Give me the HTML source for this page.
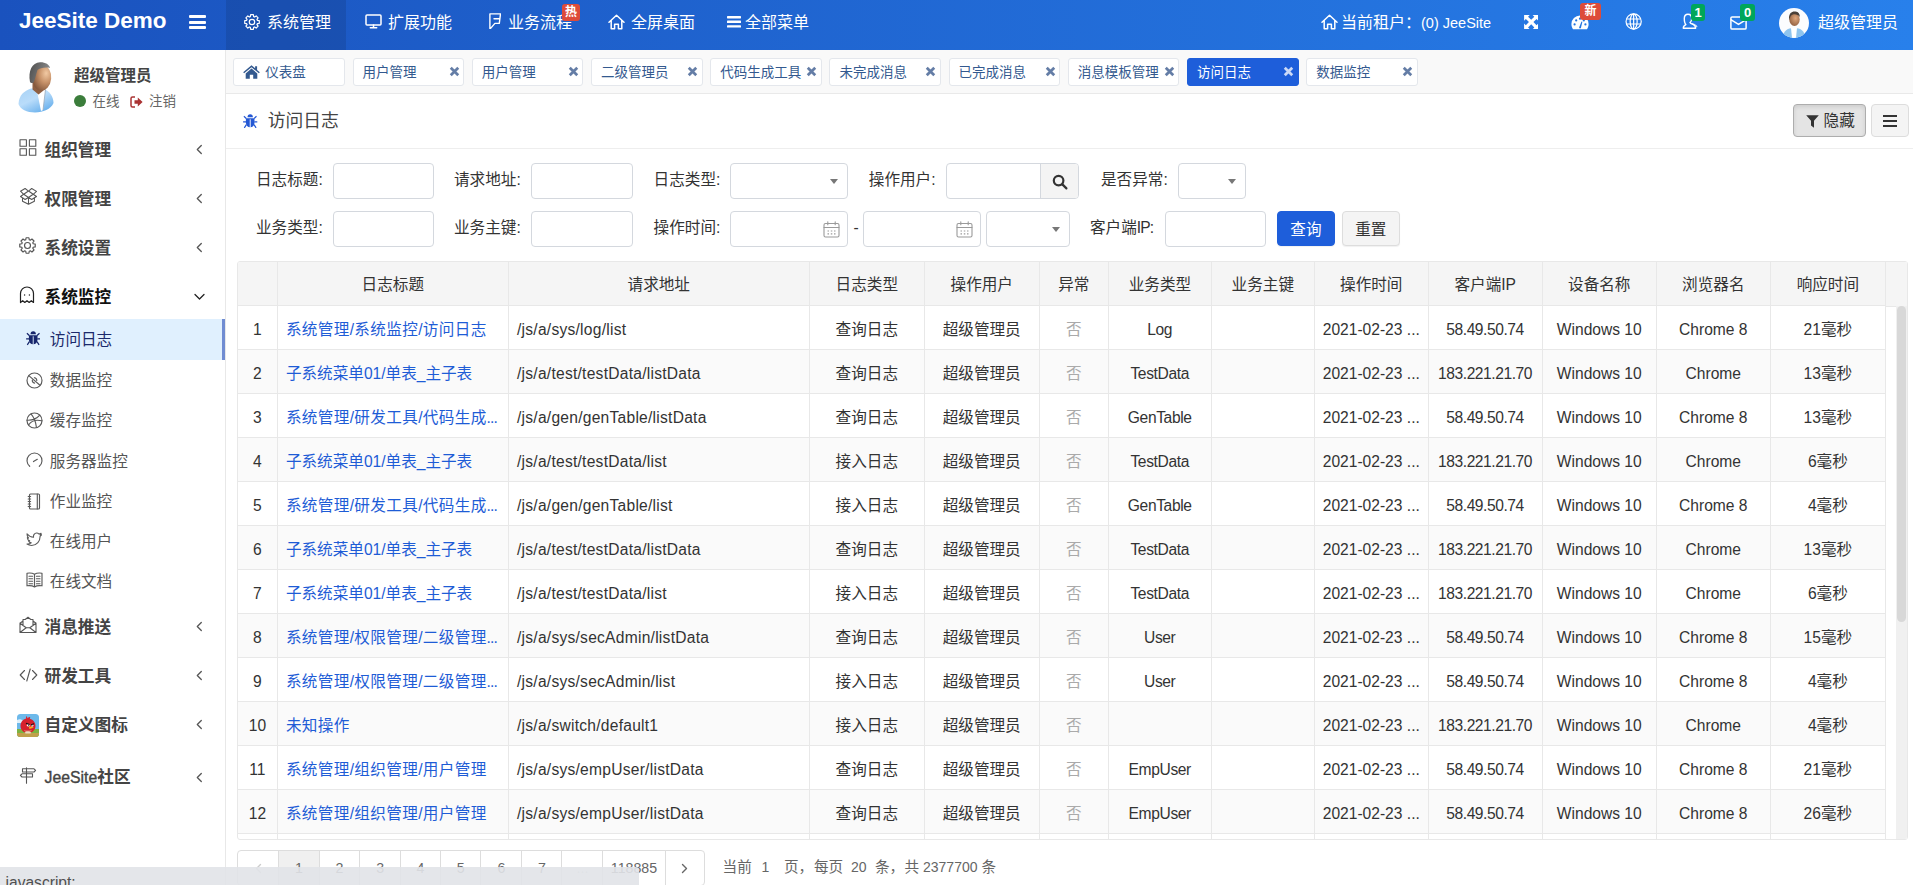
<!DOCTYPE html>
<html lang="zh-CN">
<head>
<meta charset="utf-8">
<title>JeeSite Demo</title>
<style>
*{box-sizing:border-box;margin:0;padding:0}
html,body{width:1913px;height:885px;overflow:hidden;background:#fff}
body{font-family:"Liberation Sans","Noto Sans CJK SC",sans-serif;font-size:14px;color:#333;position:relative}
a{text-decoration:none;color:inherit}
svg{display:block}
/* ---------- header ---------- */
#hdr{position:absolute;left:0;top:0;width:1913px;height:50px;background:linear-gradient(90deg,#1a52be 0%,#2880eb 100%);color:#fff}
#logo{position:absolute;left:19px;top:0;height:50px;line-height:42px;font-size:22.5px;font-weight:bold;white-space:nowrap}
#burger{position:absolute;left:189px;top:15px;width:17px;height:14px}
#burger i{position:absolute;left:0;width:17px;height:3px;border-radius:1px;background:#fff}
.nav{position:absolute;top:0;height:50px;line-height:45px;font-size:16px;white-space:nowrap}
.nav.on{background:rgba(0,0,0,.1)}
.nav svg{position:absolute}
.nav span{position:absolute;top:0}
.badge{position:absolute;font-size:12px;font-weight:bold;line-height:17px;height:17px;border-radius:3px;color:#fff;text-align:center}
/* ---------- tabs ---------- */
#tabs{position:absolute;left:226px;top:50px;width:1687px;height:44px;background:#f9f9f9;border-bottom:1px solid #e9e9e9}
.tab{position:absolute;top:7.800px;width:111.600px;height:28.400px;border:1px solid #e4e7ec;border-radius:3px;background:#fff;color:#33598f;font-size:13.500px;line-height:27px;padding-left:9px;white-space:nowrap}
.tab.on{background:#1e5eda;border-color:#1e5eda;color:#fff}
.tab .x{position:absolute;right:3.600px;top:7.600px;width:11px;height:11px;color:#647da6}
.tab.on .x{color:#cbd9f7}
/* ---------- sidebar ---------- */
#side{position:absolute;left:0;top:50px;width:226px;height:835px;background:#fff;border-right:1px solid #e8e8e8}
.m1{position:absolute;left:0;width:225px;height:49px;line-height:47px;font-size:16.700px;font-weight:bold;color:#444}
.m1 span{position:absolute;left:44.500px;top:1.700px;white-space:nowrap}
.m1 svg.ic{position:absolute;left:19px;top:14px}
.m1 svg.ar{position:absolute;left:195px;top:19px}
.m2{position:absolute;left:0;width:225px;height:40.500px;line-height:39px;font-size:15.600px;color:#555}
.m2 span{position:absolute;left:49.800px;top:1.400px;white-space:nowrap}
.m2 svg{position:absolute;left:25.800px;top:12.300px}
.m2.on{background:#e0f0fe;border-right:3px solid #708cd2;width:225px;color:#1b2a6b}

#user{position:absolute;left:0;top:0;width:225px;height:70px}
#ava{position:absolute;left:18.300px;top:11.800px}
#uname{position:absolute;left:74px;top:14.800px;font-size:15.500px;font-weight:bold;color:#444;line-height:22px;white-space:nowrap}
#ustat{position:absolute;left:74px;top:43px;font-size:13.500px;color:#666;line-height:18px;height:18px;width:140px}
#ustat i{position:absolute;left:.3px;top:1.700px;width:12.200px;height:12.200px;border-radius:50%;background:#3b7d3b}
#ustat span{position:absolute;top:0;white-space:nowrap}

/* ---------- main ---------- */
#main{position:absolute;left:226px;top:94px;width:1687px;height:791px;background:#fff}
#tbar{position:absolute;left:0;top:0;width:1687px;height:54.900px;border-bottom:1px solid #eee}
#ttl{position:absolute;left:41.700px;top:14px;font-size:17.800px;line-height:26px;color:#444;white-space:nowrap}
.tb1{position:absolute;left:1567.100px;top:10px;width:72.800px;height:32.800px;border:1px solid #adadad;border-radius:4px;background:#e4e4e4;box-shadow:inset 0 2px 4px rgba(0,0,0,.1);font-size:15.600px;color:#333}
.tb1 span{position:absolute;left:29.500px;top:0;line-height:31px;white-space:nowrap}
.tb2{position:absolute;left:1645.100px;top:10px;width:37.600px;height:32.800px;border:1px solid #ddd;border-radius:4px;background:#f4f4f4}
.tb2 i{position:absolute;left:11px;width:14px;height:2px;background:#333}
#form{position:absolute;left:0;top:0;width:1687px;height:0;font-size:15.600px}
.lb{position:absolute;height:35.200px;line-height:33.500px;color:#333;white-space:nowrap}
.in{position:absolute;height:35.200px;border:1px solid #d4d8de;border-radius:4px;background:#fff}
.tri{position:absolute;right:9px;top:14.800px;width:0;height:0;border-left:4.700px solid transparent;border-right:4.700px solid transparent;border-top:5.600px solid #777}
.cal{position:absolute;right:7px;top:8.500px}
.sb{position:absolute;right:0;top:0;width:38.500px;height:33.200px;border-left:1px solid #d4d8de;background:#f4f4f4;border-radius:0 3px 3px 0}
.sb svg{position:absolute;left:11px;top:9.500px}
.btn{position:absolute;margin-top:-.4px;height:35.200px;line-height:35px;box-shadow:0 1px 1px rgba(0,0,0,.06);text-align:center;border:1px solid #ddd;border-radius:4px;background:#f4f4f4;color:#333;font-size:15.600px}
.btn.pri{background:#1e5eda;border-color:#1e5eda;color:#fff}
#grid{position:absolute;left:11px;top:166.900px;width:1671px;height:579.400px;border:1px solid #e8e8e8;border-radius:3px;overflow:hidden;background:#fff}
#grid table{border-collapse:separate;border-spacing:0;table-layout:fixed;width:1647.800px;font-size:15.600px}
#grid th{height:43.800px;background:#f5f5f5;font-weight:normal;color:#333;text-align:center;border-right:1px solid #e8e8e8;border-bottom:1px solid #e8e8e8;white-space:nowrap;padding:0}
#grid td{height:44px;border-right:1px solid #e8e8e8;border-bottom:1px solid #e8e8e8;white-space:nowrap;overflow:hidden;padding:1px 8px 0;color:#333}
#grid tbody tr:nth-child(even) td{background:#fafafa}
#grid td:before,#grid th:before,.pg:before{content:"\4e00";visibility:hidden;display:inline;margin-right:-1em}
#grid td.c{text-align:center;padding:1px 2px 0}
#grid td.l a{color:#1e5cd6;letter-spacing:.35px}
#grid td.l a.z{letter-spacing:0}
#grid td.l a i{font-style:normal;letter-spacing:-.9px}
#grid td.u{letter-spacing:.25px}
#grid td.ip{letter-spacing:-.45px}
#grid td.b{letter-spacing:-.37px}
#grid td.n{color:#aaa}
#sbar{position:absolute;left:1648px;top:0;width:23px;height:578px;background:#fff}
#sbar:before{content:"";position:absolute;left:0;top:0;width:23px;height:43.800px;background:#f5f5f5;border-bottom:1px solid #e8e8e8}
#sbar:after{content:"";position:absolute;left:10.300px;top:43.800px;width:10.700px;height:540px;background:#f0f0f0}
#sbar i{position:absolute;z-index:1;left:11px;top:44px;width:9px;height:315.800px;border-radius:4.500px;background:#d8d8d8}
#pager{position:absolute;left:11.300px;top:755.700px;width:468.500px;height:36px;font-size:14.200px}
.pg{position:absolute;top:0;height:36px;line-height:35.500px;text-align:center;border:1px solid #ddd;color:#666;background:#fff}
.pg:first-child{border-radius:4px 0 0 4px}
.pg:last-child{border-radius:0 4px 4px 0}
.pg.act{background:#f0f0f0}
.pg.dis{color:#ccc}
.pg svg{position:absolute;left:50%;top:12px;margin-left:-3.500px}
#pinfo{position:absolute;left:496px;top:755.700px;height:36px;line-height:35px;font-size:14.600px;color:#666;white-space:nowrap}
#pinfo span{position:absolute;top:0}
#status{position:absolute;left:0;top:866.600px;width:638.800px;height:19px;background:rgba(225,227,232,.9);color:#505050;font-size:15.600px;line-height:32.400px;padding-left:5.500px;border-top-right-radius:3px;overflow:hidden}
</style>
</head>
<body>
<!-- ================= HEADER ================= -->
<div id="hdr">
  <div id="logo">JeeSite Demo</div>
  <div id="burger"><i style="top:0"></i><i style="top:5.5px"></i><i style="top:11px"></i></div>

  <a class="nav on" style="left:226px;width:120px">
    <svg style="left:18px;top:14px" width="16" height="16" viewBox="0 0 16 16" fill="none" stroke="#fff" stroke-width="1.2" stroke-linejoin="round"><path d="M6.32 2.66 L6.66 0.72 L9.34 0.72 L9.68 2.66 L10.59 3.04 L12.20 1.90 L14.10 3.80 L12.96 5.41 L13.34 6.32 L15.28 6.66 L15.28 9.34 L13.34 9.68 L12.96 10.59 L14.10 12.20 L12.20 14.10 L10.59 12.96 L9.68 13.34 L9.34 15.28 L6.66 15.28 L6.32 13.34 L5.41 12.96 L3.80 14.10 L1.90 12.20 L3.04 10.59 L2.66 9.68 L0.72 9.34 L0.72 6.66 L2.66 6.32 L3.04 5.41 L1.90 3.80 L3.80 1.90 L5.41 3.04Z"/><circle cx="8" cy="8" r="2.7"/></svg>
    <span style="left:41px">系统管理</span>
  </a>
  <a class="nav" style="left:346px;width:122px">
    <svg style="left:19px;top:14px" width="17" height="15" viewBox="0 0 17 15" fill="none" stroke="#fff" stroke-width="1.5" stroke-linecap="round" stroke-linejoin="round"><rect x="1" y="1" width="15" height="10" rx="1"/><path d="M8.5 11v2.6M5.3 13.8h6.4"/></svg>
    <span style="left:42px">扩展功能</span>
  </a>
  <a class="nav" style="left:468px;width:120px">
    <svg style="left:20.900px;top:12.900px" width="12.400" height="16.400" viewBox="0 0 12.400 16.400" fill="none" stroke="#fff" stroke-width="1.400" stroke-linejoin="round" stroke-linecap="round"><path d="M.9.9H11.500L10.300 10.400H5.900L1.600 15.400H.9zM5 5.700H10.600"/></svg>
    <span style="left:40px">业务流程</span>
    <em class="badge" style="left:94px;top:4px;width:18px;background:#dd4b39;font-style:normal">热</em>
  </a>
  <a class="nav" style="left:588px;width:122px">
    <svg style="left:20px;top:14px" width="17" height="16" viewBox="0 0 17 16" fill="none" stroke="#fff" stroke-width="1.5" stroke-linecap="round" stroke-linejoin="round"><path d="M1 8.2L8.5 1.2L16 8.2M3.2 6.6V14.8H6.6V10.2H10.4V14.8H13.8V6.6"/></svg>
    <span style="left:43px">全屏桌面</span>
  </a>
  <a class="nav" style="left:710px;width:116px">
    <svg style="left:17px;top:16px" width="14" height="12" viewBox="0 0 14 12" fill="#fff"><rect x="0" y="0" width="14" height="2.4" rx=".6"/><rect x="0" y="4.6" width="14" height="2.4" rx=".6"/><rect x="0" y="9.2" width="14" height="2.4" rx=".6"/></svg>
    <span style="left:35px">全部菜单</span>
  </a>
  <a class="nav" style="left:1305px;width:200px">
    <svg style="left:16px;top:14px" width="17" height="16" viewBox="0 0 17 16" fill="none" stroke="#fff" stroke-width="1.5" stroke-linecap="round" stroke-linejoin="round"><path d="M1 8.2L8.5 1.2L16 8.2M3.2 6.6V14.8H6.6V10.2H10.4V14.8H13.8V6.6"/></svg>
    <span style="left:36px">当前租户：<i style="font-style:normal;font-size:14.500px">(0) JeeSite</i></span>
  </a>
  <a class="nav" style="left:1510px;width:44px">
    <svg style="left:14px;top:15.200px" width="14.400" height="14.200" viewBox="0 0 14 14" fill="#fff"><path d="M0 0h5.600L3.900 1.700 7 4.800l3.100-3.100L8.400 0H14v5.600l-1.700-1.700L9.200 7l3.100 3.100L14 8.400V14H8.400l1.700-1.700L7 9.200l-3.100 3.100L5.600 14H0V8.400l1.700 1.700L4.800 7 1.700 3.900 0 5.600z"/></svg>
  </a>
  <a class="nav" style="left:1556px;width:48px">
    <svg style="left:15px;top:15px" width="18" height="15" viewBox="0 0 18 15" fill="#fff"><path d="M9 0.5a8.6 8.6 0 0 0-8.6 8.6c0 2 .6 3.7 1.6 5.2h14c1-1.5 1.6-3.200 1.600-5.200A8.600 8.600 0 0 0 9 .5z"/><g fill="#2273df"><circle cx="3.600" cy="9.400" r="1.100"/><circle cx="5.200" cy="5.400" r="1.100"/><circle cx="9" cy="3.700" r="1.100"/><circle cx="12.800" cy="5.400" r="1.100"/><circle cx="14.400" cy="9.400" r="1.100"/><path d="M8.100 12.600l2.400-6.200.9.300-1.500 6.400a1 1 0 0 1-1.800-.5z"/></g></svg>
    <em class="badge" style="left:24.300px;top:3px;width:20.500px;background:#dd4b39;font-style:normal">新</em>
  </a>
  <a class="nav" style="left:1610px;width:48px">
    <svg style="left:14.800px;top:12.500px" width="17.300" height="17" viewBox="0 0 17 17" fill="none" stroke="#fff" stroke-width="1.200"><circle cx="8.500" cy="8.500" r="7.600"/><ellipse cx="8.500" cy="8.500" rx="3.500" ry="7.600"/><path d="M8.500.9v15.200M1.200 6h14.600M1.200 11h14.600"/></svg>
  </a>
  <a class="nav" style="left:1664px;width:48px">
    <svg style="left:15.600px;top:12.600px" width="18" height="17" viewBox="0 0 18 17" fill="none" stroke="#fff" stroke-width="1.400" stroke-linejoin="round"><path d="M11.500 10.200c.6.500 1.600.9 2.900 1.400 1.500.5 2.300 1.300 2.500 2.600" stroke-opacity=".75"/><path d="M8 1.200c2.300 0 3.700 1.900 3.700 4.300 0 1.700-.7 3.200-1.700 4 .3.900 1.300 1.300 3 1.900 1.600.600 2.500 1.500 2.600 3.800H3.300c0-1.800.7-2.900 2.600-3.600C4.700 10.500 4.300 8.400 4.300 5.500 4.300 3.100 5.700 1.200 8 1.200z"/></svg>
    <em class="badge" style="left:27px;top:4px;width:14px;height:17px;line-height:17px;font-size:13px;background:#00a65a;font-style:normal">1</em>
  </a>
  <a class="nav" style="left:1714px;width:48px">
    <svg style="left:16px;top:15.800px" width="17" height="14" viewBox="0 0 17 14" fill="none" stroke="#fff" stroke-width="1.500" stroke-linejoin="round" stroke-linecap="round"><rect x=".9" y=".9" width="15.200" height="12.200" rx="1.200"/><path d="M1.200 3.800L8.500 8.400l7.300-4.600"/></svg>
    <em class="badge" style="left:26px;top:4px;width:15px;height:17px;line-height:17px;font-size:13px;background:#00a65a;font-style:normal">0</em>
  </a>
  <a class="nav" style="left:1768px;width:145px">
    <svg style="left:11px;top:8px" width="30" height="30" viewBox="0 0 30 30"><defs><clipPath id="avc"><circle cx="15" cy="15" r="15"/></clipPath><radialGradient id="skin" cx=".6" cy=".4" r=".7"><stop offset="0" stop-color="#e0a77c"/><stop offset="1" stop-color="#8b5a3c"/></radialGradient></defs><g clip-path="url(#avc)"><rect width="30" height="30" fill="#fbfcfe"/><path d="M4 30c0-7 4-10 11-10s11 3 11 10z" fill="#8ec4ee"/><path d="M12 20h6l-1 10h-4z" fill="#fff"/><ellipse cx="15.500" cy="11.500" rx="5.200" ry="6.500" fill="url(#skin)"/><path d="M10 10c0-5 3-7 6.500-6.500 3 .4 4.500 2.500 4.300 5.500-1.500-2-4-3-6.800-2.500C12 7 11 8.500 10.500 12z" fill="#4a4038"/></g></svg>
    <span style="left:50px">超级管理员</span>
  </a>

</div>
<!-- ================= TABS ================= -->
<div id="tabs">
  <a class="tab" style="left:7.3px"><svg style="position:absolute;left:9px;top:6px" width="17" height="14" viewBox="0 0 17 14" fill="#33598f"><path d="M8.500.3L.2 7.200l.9 1.100L8.500 2.300l7.400 6 .9-1.100-2.700-2.200V1.200h-2v2.100zM8.500 3.600L2.700 8.400V13.700h4.100V9.700h3.400v4h4.100V8.400z"/></svg><span style="margin-left:22px">仪表盘</span></a>
  <a class="tab" style="left:126.5px">用户管理<svg class="x" width="10" height="10" viewBox="0 0 10 10"><path d="M1.600 1.600l6.800 6.800M8.400 1.600L1.600 8.400" stroke="currentColor" stroke-width="2.500" fill="none"/></svg></a>
  <a class="tab" style="left:245.7px">用户管理<svg class="x" width="10" height="10" viewBox="0 0 10 10"><path d="M1.600 1.600l6.800 6.800M8.400 1.600L1.600 8.400" stroke="currentColor" stroke-width="2.500" fill="none"/></svg></a>
  <a class="tab" style="left:365.0px">二级管理员<svg class="x" width="10" height="10" viewBox="0 0 10 10"><path d="M1.600 1.600l6.800 6.800M8.400 1.600L1.600 8.400" stroke="currentColor" stroke-width="2.500" fill="none"/></svg></a>
  <a class="tab" style="left:484.2px">代码生成工具<svg class="x" width="10" height="10" viewBox="0 0 10 10"><path d="M1.600 1.600l6.800 6.800M8.400 1.600L1.600 8.400" stroke="currentColor" stroke-width="2.500" fill="none"/></svg></a>
  <a class="tab" style="left:603.4px">未完成消息<svg class="x" width="10" height="10" viewBox="0 0 10 10"><path d="M1.600 1.600l6.800 6.800M8.400 1.600L1.600 8.400" stroke="currentColor" stroke-width="2.500" fill="none"/></svg></a>
  <a class="tab" style="left:722.6px">已完成消息<svg class="x" width="10" height="10" viewBox="0 0 10 10"><path d="M1.600 1.600l6.800 6.800M8.400 1.600L1.600 8.400" stroke="currentColor" stroke-width="2.500" fill="none"/></svg></a>
  <a class="tab" style="left:841.8px">消息模板管理<svg class="x" width="10" height="10" viewBox="0 0 10 10"><path d="M1.600 1.600l6.800 6.800M8.400 1.600L1.600 8.400" stroke="currentColor" stroke-width="2.500" fill="none"/></svg></a>
  <a class="tab on" style="left:961.1px">访问日志<svg class="x" width="10" height="10" viewBox="0 0 10 10"><path d="M1.600 1.600l6.800 6.800M8.400 1.600L1.600 8.400" stroke="currentColor" stroke-width="2.500" fill="none"/></svg></a>
  <a class="tab" style="left:1080.3px">数据监控<svg class="x" width="10" height="10" viewBox="0 0 10 10"><path d="M1.600 1.600l6.800 6.800M8.400 1.600L1.600 8.400" stroke="currentColor" stroke-width="2.500" fill="none"/></svg></a>
</div>
<!-- ================= SIDEBAR ================= -->
<div id="side">
  <div id="user">
    <svg id="ava" width="36" height="51" viewBox="0 0 36 51"><defs><radialGradient id="sk2" cx=".7" cy=".3" r=".8"><stop offset="0" stop-color="#f1c9a3"/><stop offset=".45" stop-color="#c8936a"/><stop offset="1" stop-color="#7c5137"/></radialGradient><linearGradient id="sh2" x1="0" y1="0" x2=".7" y2="1"><stop offset="0" stop-color="#a8d2f5"/><stop offset=".5" stop-color="#b9dcfa"/><stop offset="1" stop-color="#69b0ec"/></linearGradient><linearGradient id="hr2" x1="0" y1="0" x2="1" y2=".3"><stop offset="0" stop-color="#4d4d4d"/><stop offset="1" stop-color="#8a8a8a"/></linearGradient></defs><path d="M.5 42C1 33 6 29 13 26.500L25 26.500C31 29 35.500 34 35.500 41 33 47 25 50.500 17 50.500 9 50.500 2 47 .5 42z" fill="url(#sh2)"/><path d="M19 29l8.500-1.500L25 48l-2 1z" fill="#fff"/><path d="M27.500 27.500L25 48" stroke="#9ab" stroke-width=".8" fill="none"/><path d="M14.500 20h11v8.500l-5 4-6-5z" fill="#8e5f42"/><ellipse cx="24" cy="16" rx="9.200" ry="12.800" fill="url(#sk2)" transform="rotate(6 24 16)"/><path d="M12 20C10 9 14 .6 22 .3c5-.2 9.500 2.200 10 5.700-4.500-1-10.500 0-12.500 2-1.500 4-2 8.500-4 12.500-1.200 1-2.800.5-3.500-.5z" fill="url(#hr2)"/></svg>
    <div id="uname">超级管理员</div>
    <div id="ustat"><i></i><span style="left:18.500px">在线</span><svg style="position:absolute;left:56px;top:3px" width="13" height="12" viewBox="0 0 13 12"><path d="M5 1H2.500A1.500 1.500 0 0 0 1 2.500v7A1.500 1.500 0 0 0 2.500 11H5" fill="none" stroke="#a33" stroke-width="1.500"/><path d="M4.500 4.300h3.300V1.600L12.600 6 7.800 10.400V7.700H4.500z" fill="#a33"/></svg><span style="left:75px">注销</span></div>
  </div>
  <a class="m1" style="top:75.0px"><svg class="ic" width="18" height="17" viewBox="0 0 18 17" stroke="#555" stroke-width="1.100" fill="none" stroke-linecap="round" stroke-linejoin="round"><rect x="1" y=".8" width="6.400" height="6.400"/><rect x="10.400" y=".8" width="6.400" height="6.400"/><rect x="1" y="9.800" width="6.400" height="6.400"/><rect x="10.400" y="9.800" width="6.400" height="6.400"/></svg><span>组织管理</span><svg class="ar" width="8" height="11" viewBox="0 0 8 11" fill="none" stroke="#555" stroke-width="1.300" stroke-linecap="round" stroke-linejoin="round"><path d="M6.300 1.500L2.300 5.500 6.300 9.500"/></svg></a>
  <a class="m1" style="top:124.0px"><svg class="ic" style="left:19.900px;top:14.100px" width="17" height="17" viewBox="0 0 17 17" stroke="#555" stroke-width="1.050" fill="none" stroke-linecap="round" stroke-linejoin="round"><path d="M.5 3.200L5.100.5 8.500 3.050 3.700 6.300zM8.500 3.050L11.700.5 16.500 3.400 13.200 6.300zM3.700 6.300L8.500 9.500 13.200 6.300M.5 8.500L3.700 6.300M.5 8.500L5.100 11.500 8.500 9.500 11.700 11.500 16.500 8.500 13.200 6.300M2.500 10.200V13.200L8.500 16.300 14.400 13.200V10.200M8.500 9.500V16.300"/></svg><span>权限管理</span><svg class="ar" width="8" height="11" viewBox="0 0 8 11" fill="none" stroke="#555" stroke-width="1.300" stroke-linecap="round" stroke-linejoin="round"><path d="M6.300 1.500L2.300 5.500 6.300 9.500"/></svg></a>
  <a class="m1" style="top:173.0px"><svg class="ic" width="17" height="17" viewBox="0 0 16 16" stroke="#555" stroke-width="1.100" fill="none" stroke-linecap="round" stroke-linejoin="round"><path d="M6.32 2.66 L6.66 0.72 L9.34 0.72 L9.68 2.66 L10.59 3.04 L12.20 1.90 L14.10 3.80 L12.96 5.41 L13.34 6.32 L15.28 6.66 L15.28 9.34 L13.34 9.68 L12.96 10.59 L14.10 12.20 L12.20 14.10 L10.59 12.96 L9.68 13.34 L9.34 15.28 L6.66 15.28 L6.32 13.34 L5.41 12.96 L3.80 14.10 L1.90 12.20 L3.04 10.59 L2.66 9.68 L0.72 9.34 L0.72 6.66 L2.66 6.32 L3.04 5.41 L1.90 3.80 L3.80 1.90 L5.41 3.04Z"/><circle cx="8" cy="8" r="2.800"/></svg><span>系统设置</span><svg class="ar" width="8" height="11" viewBox="0 0 8 11" fill="none" stroke="#555" stroke-width="1.300" stroke-linecap="round" stroke-linejoin="round"><path d="M6.300 1.500L2.300 5.500 6.300 9.500"/></svg></a>
  <a class="m1" style="top:222.0px;color:#111"><svg class="ic" width="16" height="18" viewBox="0 0 16 18" stroke="#222" stroke-width="1.200" fill="none" stroke-linejoin="round"><path d="M1.500 16.500V7.500a6.500 6.500 0 0 1 13 0v9l-2.200-1.800-2.100 1.800L8 14.700l-2.200 1.800-2.100-1.800z"/><circle cx="5.600" cy="9" r=".7" fill="#222" stroke="none"/><circle cx="10.400" cy="9" r=".7" fill="#222" stroke="none"/></svg><span>系统监控</span><svg class="ar" style="left:194px;top:21px" width="11" height="8" viewBox="0 0 11 8" fill="none" stroke="#222" stroke-width="1.300" stroke-linecap="round" stroke-linejoin="round"><path d="M1 1.500L5.500 6 10 1.500"/></svg></a>
  <a class="m2 on" style="top:269.0px"><svg width="14.4" height="14.4" viewBox="0 0 14.400 14.400"><g fill="#16256b"><path d="M4.500 3.150a2.700 3 0 0 1 5.400 0z"/><path d="M2.900 4.150h8.600v4.300c0 3.100-1.700 4.900-4.300 4.900s-4.300-1.800-4.300-4.900z"/></g><rect x="6.750" y="5.300" width=".9" height="8.300" fill="#e0f0fe"/><path d="M.9 2.300l2.400 2.200M13.500 2.300l-2.400 2.200M.1 7.900h3M11.300 7.900h3M3.400 10.600l-2.100 3.300M11 10.600l2.100 3.300" stroke="#16256b" stroke-width="1.200" fill="none"/></svg><span>访问日志</span></a>
  <a class="m2" style="top:309.7px"><svg width="17" height="17" viewBox="0 0 17 17" stroke="#5a5a5a" stroke-width="1.150" fill="none" stroke-linecap="round" stroke-linejoin="round"><circle cx="8.500" cy="8.500" r="7.500"/><path d="M2.800 3.600l11.200 9.600M6.300 8.200a2.800 2.800 0 0 0 2.300 2.900M8.400 5.700a2.800 2.800 0 0 1 2.400 2.700"/></svg><span>数据监控</span></a>
  <a class="m2" style="top:350.0px"><svg width="17" height="17" viewBox="0 0 17 17" stroke="#5a5a5a" stroke-width="1.150" fill="none" stroke-linecap="round" stroke-linejoin="round"><circle cx="8.500" cy="8.500" r="7.500"/><path d="M5 1.900c3 3.500 4.800 8 5.400 13.300M1.100 8.200c5 .2 9.500-1.300 12.700-5M2.600 13c2.500-3.800 7.500-5.600 13.300-4.200"/></svg><span>缓存监控</span></a>
  <a class="m2" style="top:390.2px"><svg width="17" height="17" viewBox="0 0 17 17" stroke="#5a5a5a" stroke-width="1.150" fill="none" stroke-linecap="round" stroke-linejoin="round"><path d="M3.700 14.300a7.500 7.500 0 1 1 9.600 0M7.500 9.600l3.800-2.300"/></svg><span>服务器监控</span></a>
  <a class="m2" style="top:430.4px"><svg width="17" height="17" viewBox="0 0 17 17" stroke="#5a5a5a" stroke-width="1.150" fill="none" stroke-linecap="round" stroke-linejoin="round"><rect x="3.500" y="1" width="10" height="15" rx="1"/><path d="M11.300 1v15M2.200 3.500h2.400M2.200 6h2.400M2.200 8.500h2.400M2.200 11h2.400M2.200 13.500h2.400"/></svg><span>作业监控</span></a>
  <a class="m2" style="top:470.6px"><svg style="top:11.300px" width="16.500" height="14.500" viewBox="0 0 17 15" stroke="#5a5a5a" stroke-width="1.150" fill="none" stroke-linecap="round" stroke-linejoin="round"><path d="M1 1.800c1.700 2.200 4 3.500 6.800 3.700-.5-2.300 1-4.300 3.100-4.400 1-.050 1.800.3 2.500 1l2.200-.7-1 1.700 1.500-.2-1.600 1.600c.2 4.900-3.300 9.300-8.700 9.400-1.800 0-3.400-.5-4.800-1.400 1.700.1 3.100-.3 4.400-1.300-1.400-.1-2.400-.9-2.900-2.100h1.300C2.300 8.600 1.400 7.500 1.300 5.900l1.300.4C1.400 5 1 3.500 1 1.800z"/></svg><span>在线用户</span></a>
  <a class="m2" style="top:510.8px"><svg style="top:10.800px" width="17" height="16" viewBox="0 0 17 16" stroke="#5a5a5a" stroke-width="1.150" fill="none" stroke-linecap="round" stroke-linejoin="round"><path d="M8.500 2.200C6.500 1 3.700.8 1 1.200v12.600c2.700-.4 5.500-.2 7.500 1.200 2-1.400 4.800-1.600 7.500-1.200V1.200c-2.700-.4-5.500-.2-7.500 1zM8.500 2.200V15M3 4.200h3.600M3 6.700h3.600M3 9.200h3.600M3 11.700h3.600M10.400 4.200H14M10.400 6.700H14M10.400 9.200H14M10.400 11.700H14"/></svg><span>在线文档</span></a>
  <a class="m1" style="top:552.0px"><svg class="ic" width="18" height="18" viewBox="0 0 18 18" stroke="#555" stroke-width="1.100" fill="none" stroke-linecap="round" stroke-linejoin="round"><path d="M1 7.200L4 5V3.500h2.200L9 1.300l2.800 2.200H14V5l3 2.200V16.500H1zM1 7.200l6.200 4.600M17 7.200l-6.200 4.600M1 16.500l6.200-4.700h3.600l6.200 4.700M4 5v4.400M14 5v4.400"/></svg><span>消息推送</span><svg class="ar" width="8" height="11" viewBox="0 0 8 11" fill="none" stroke="#555" stroke-width="1.300" stroke-linecap="round" stroke-linejoin="round"><path d="M6.300 1.500L2.300 5.500 6.300 9.500"/></svg></a>
  <a class="m1" style="top:601.0px"><svg class="ic" style="top:17.300px" width="19" height="14" viewBox="0 0 19 14" stroke="#555" stroke-width="1.100" fill="none" stroke-linecap="round" stroke-linejoin="round"><path d="M5.500 2.500L1.200 7l4.300 4.500M13.500 2.500L17.800 7l-4.300 4.500M11.200 1L7.800 13"/></svg><span>研发工具</span><svg class="ar" width="8" height="11" viewBox="0 0 8 11" fill="none" stroke="#555" stroke-width="1.300" stroke-linecap="round" stroke-linejoin="round"><path d="M6.300 1.500L2.300 5.500 6.300 9.500"/></svg></a>
  <a class="m1" style="top:650.0px"><svg class="ic" style="left:17.200px;top:13.600px" width="22" height="23" viewBox="0 0 22 23"><defs><clipPath id="abc"><rect width="22" height="23" rx="3.500"/></clipPath></defs><g clip-path="url(#abc)"><rect width="22" height="23" fill="#6db9ea"/><path d="M0 6c2-1 4-1 5 0s3 1 4 0 3-1 4 0V9H0z" fill="#dff0fb"/><rect y="15" width="22" height="8" fill="#7cb342"/><rect y="19" width="22" height="4" fill="#c0a04a"/><path d="M10.500 4.200c1-.8 2-1.400 2.800-1.200-.3.700-.5 1.200-.4 1.700 3.300.9 5.600 3.700 5.600 7.300 0 4.200-3.300 7-7.500 7S3.500 16.200 3.500 12c0-3.400 2.300-6.600 5.600-7.500-.2-.8-.100-1.700.5-2.500.4.700.7 1.500.9 2.200z" fill="#d6202c"/><path d="M7 16.500c1.200 1.700 6.300 1.700 7.800 0-1 .2-6.500.3-7.800 0z" fill="#e8d9b8"/><path d="M7.500 19c1.500.8 5.500.8 7 0-.6-1.600-6.300-1.700-7 0z" fill="#ecdcc0"/><path d="M12 12.200l5 1.300-4.600 1.500z" fill="#f6b21b"/><circle cx="11.200" cy="11.200" r="1.300" fill="#fff"/><circle cx="15.200" cy="11.400" r="1.200" fill="#fff"/><circle cx="11.600" cy="11.300" r=".55" fill="#111"/><circle cx="14.900" cy="11.500" r=".5" fill="#111"/><path d="M9 9.300l3.600 1.200M17 9.800l-3 .9" stroke="#111" stroke-width="1.100"/></g></svg><span>自定义图标</span><svg class="ar" width="8" height="11" viewBox="0 0 8 11" fill="none" stroke="#555" stroke-width="1.300" stroke-linecap="round" stroke-linejoin="round"><path d="M6.300 1.500L2.300 5.500 6.300 9.500"/></svg></a>
  <a class="m1" style="top:702.5px"><svg class="ic" width="18" height="17" viewBox="0 0 18 17" stroke="#555" stroke-width="1.100" fill="none" stroke-linecap="round" stroke-linejoin="round"><path d="M7.500 .8v15.400M3.500 1.800H15l1.600 1.600L15 5H3.500zM13.500 6.800H3L1.400 8.400 3 10h10.500z"/></svg><span><i style="font-style:normal;font-weight:normal;font-size:15.800px;-webkit-text-stroke:.35px #444">JeeSite</i>社区</span><svg class="ar" width="8" height="11" viewBox="0 0 8 11" fill="none" stroke="#555" stroke-width="1.300" stroke-linecap="round" stroke-linejoin="round"><path d="M6.300 1.500L2.300 5.500 6.300 9.500"/></svg></a>
</div>
<!-- ================= MAIN ================= -->
<div id="main">
  <div id="tbar">
    <svg style="position:absolute;left:17.300px;top:19.700px" width="14.4" height="14.4" viewBox="0 0 14.400 14.400"><g fill="#2458d4"><path d="M4.500 3.150a2.700 3 0 0 1 5.400 0z"/><path d="M2.900 4.150h8.600v4.300c0 3.100-1.700 4.900-4.300 4.900s-4.300-1.800-4.300-4.900z"/></g><rect x="6.750" y="5.300" width=".9" height="8.300" fill="#fff"/><path d="M.9 2.300l2.400 2.200M13.500 2.300l-2.400 2.200M.1 7.900h3M11.300 7.900h3M3.400 10.600l-2.100 3.300M11 10.600l2.100 3.300" stroke="#2458d4" stroke-width="1.200" fill="none"/></svg>
    <div id="ttl">访问日志</div>
    <a class="tb1"><svg style="position:absolute;left:12px;top:10px" width="13" height="13" viewBox="0 0 13 13" fill="#333"><path d="M.2.300h12.600L8 5.800V12.800L5 10.500V5.800z"/></svg><span>隐藏</span></a>
    <a class="tb2"><i style="top:10.200px"></i><i style="top:14.900px"></i><i style="top:19.600px"></i></a>
  </div>
  <div id="form"><label class="lb" style="left:30.0px;top:69.400px">日志标题:</label><div class="in" style="left:107.0px;top:69.400px;width:100.8px"></div><label class="lb" style="left:228.0px;top:69.400px">请求地址:</label><div class="in" style="left:305.0px;top:69.400px;width:101.5px"></div><label class="lb" style="left:427.6px;top:69.400px">日志类型:</label><div class="in" style="left:504.2px;top:69.400px;width:117.4px"><i class="tri"></i></div><label class="lb" style="left:642.8px;top:69.400px">操作用户:</label><div class="in" style="left:720.4px;top:69.400px;width:133.1px"><div class="sb"><svg width="16" height="16" viewBox="0 0 16 16" fill="none" stroke="#333" stroke-width="2.200" stroke-linecap="round"><circle cx="6.600" cy="6.600" r="4.800"/><path d="M10.400 10.400l4 4"/></svg></div></div><label class="lb" style="left:875.0px;top:69.400px">是否异常:</label><div class="in" style="left:952.0px;top:69.400px;width:67.8px"><i class="tri"></i></div><label class="lb" style="left:30.0px;top:117.4px">业务类型:</label><div class="in" style="left:107.0px;top:117.4px;width:100.8px"></div><label class="lb" style="left:228.0px;top:117.4px">业务主键:</label><div class="in" style="left:305.0px;top:117.4px;width:101.5px"></div><label class="lb" style="left:427.6px;top:117.4px">操作时间:</label><div class="in" style="left:504.2px;top:117.4px;width:117.4px"><svg class="cal" width="17" height="17" viewBox="0 0 17 17" fill="none" stroke="#9a9a9a" stroke-width="1.100"><rect x="1" y="2.500" width="15" height="13.500" rx="1.500"/><path d="M1 6.500h15M4.800 .8v3M12.200 .8v3" stroke-linecap="round"/><path d="M4.500 10h1.500M7.800 10h1.500M11 10h1.500M4.500 12.800h1.500M7.800 12.800h1.500M11 12.800h1.500" stroke-width="1.200"/></svg></div><label class="lb" style="left:627.5px;top:117.4px">-</label><div class="in" style="left:637.0px;top:117.4px;width:117.5px"><svg class="cal" width="17" height="17" viewBox="0 0 17 17" fill="none" stroke="#9a9a9a" stroke-width="1.100"><rect x="1" y="2.500" width="15" height="13.500" rx="1.500"/><path d="M1 6.500h15M4.800 .8v3M12.200 .8v3" stroke-linecap="round"/><path d="M4.500 10h1.500M7.800 10h1.500M11 10h1.500M4.500 12.800h1.500M7.800 12.800h1.500M11 12.800h1.500" stroke-width="1.200"/></svg></div><div class="in" style="left:760.0px;top:117.4px;width:83.5px"><i class="tri"></i></div><label class="lb" style="left:864.0px;top:117.4px">客户端<i style="font-style:normal;letter-spacing:-.9px">IP:</i></label><div class="in" style="left:939.0px;top:117.4px;width:100.6px"></div><a class="btn pri" style="left:1051.0px;top:117.4px;width:57.800px">查询</a><a class="btn" style="left:1116.0px;top:117.4px;width:57.700px">重置</a></div>
  <div id="grid">
    <table><colgroup><col style="width:39.9px"><col style="width:230.8px"><col style="width:301.1px"><col style="width:115.0px"><col style="width:114.9px"><col style="width:69.3px"><col style="width:102.9px"><col style="width:102.9px"><col style="width:114.0px"><col style="width:114.0px"><col style="width:114.0px"><col style="width:114.1px"><col style="width:114.9px"></colgroup>
    <thead><tr><th></th><th>日志标题</th><th>请求地址</th><th>日志类型</th><th>操作用户</th><th>异常</th><th>业务类型</th><th>业务主键</th><th>操作时间</th><th>客户端IP</th><th>设备名称</th><th>浏览器名</th><th>响应时间</th></tr></thead>
    <tbody>
<tr><td class="c">1</td><td class="l"><a>系统管理/系统监控/访问日志</a></td><td class="l u">/js/a/sys/log/list</td><td class="c">查询日志</td><td class="c">超级管理员</td><td class="c n">否</td><td class="c b">Log</td><td></td><td class="c">2021-02-23 ...</td><td class="c ip">58.49.50.74</td><td class="c">Windows 10</td><td class="c">Chrome 8</td><td class="c">21毫秒</td></tr>
<tr><td class="c">2</td><td class="l"><a class="z">子系统菜单01/单表_主子表</a></td><td class="l u">/js/a/test/testData/listData</td><td class="c">查询日志</td><td class="c">超级管理员</td><td class="c n">否</td><td class="c b">TestData</td><td></td><td class="c">2021-02-23 ...</td><td class="c ip">183.221.21.70</td><td class="c">Windows 10</td><td class="c">Chrome</td><td class="c">13毫秒</td></tr>
<tr><td class="c">3</td><td class="l"><a>系统管理/研发工具/代码生成<i>...</i></a></td><td class="l u">/js/a/gen/genTable/listData</td><td class="c">查询日志</td><td class="c">超级管理员</td><td class="c n">否</td><td class="c b">GenTable</td><td></td><td class="c">2021-02-23 ...</td><td class="c ip">58.49.50.74</td><td class="c">Windows 10</td><td class="c">Chrome 8</td><td class="c">13毫秒</td></tr>
<tr><td class="c">4</td><td class="l"><a class="z">子系统菜单01/单表_主子表</a></td><td class="l u">/js/a/test/testData/list</td><td class="c">接入日志</td><td class="c">超级管理员</td><td class="c n">否</td><td class="c b">TestData</td><td></td><td class="c">2021-02-23 ...</td><td class="c ip">183.221.21.70</td><td class="c">Windows 10</td><td class="c">Chrome</td><td class="c">6毫秒</td></tr>
<tr><td class="c">5</td><td class="l"><a>系统管理/研发工具/代码生成<i>...</i></a></td><td class="l u">/js/a/gen/genTable/list</td><td class="c">接入日志</td><td class="c">超级管理员</td><td class="c n">否</td><td class="c b">GenTable</td><td></td><td class="c">2021-02-23 ...</td><td class="c ip">58.49.50.74</td><td class="c">Windows 10</td><td class="c">Chrome 8</td><td class="c">4毫秒</td></tr>
<tr><td class="c">6</td><td class="l"><a class="z">子系统菜单01/单表_主子表</a></td><td class="l u">/js/a/test/testData/listData</td><td class="c">查询日志</td><td class="c">超级管理员</td><td class="c n">否</td><td class="c b">TestData</td><td></td><td class="c">2021-02-23 ...</td><td class="c ip">183.221.21.70</td><td class="c">Windows 10</td><td class="c">Chrome</td><td class="c">13毫秒</td></tr>
<tr><td class="c">7</td><td class="l"><a class="z">子系统菜单01/单表_主子表</a></td><td class="l u">/js/a/test/testData/list</td><td class="c">接入日志</td><td class="c">超级管理员</td><td class="c n">否</td><td class="c b">TestData</td><td></td><td class="c">2021-02-23 ...</td><td class="c ip">183.221.21.70</td><td class="c">Windows 10</td><td class="c">Chrome</td><td class="c">6毫秒</td></tr>
<tr><td class="c">8</td><td class="l"><a>系统管理/权限管理/二级管理<i>...</i></a></td><td class="l u">/js/a/sys/secAdmin/listData</td><td class="c">查询日志</td><td class="c">超级管理员</td><td class="c n">否</td><td class="c b">User</td><td></td><td class="c">2021-02-23 ...</td><td class="c ip">58.49.50.74</td><td class="c">Windows 10</td><td class="c">Chrome 8</td><td class="c">15毫秒</td></tr>
<tr><td class="c">9</td><td class="l"><a>系统管理/权限管理/二级管理<i>...</i></a></td><td class="l u">/js/a/sys/secAdmin/list</td><td class="c">接入日志</td><td class="c">超级管理员</td><td class="c n">否</td><td class="c b">User</td><td></td><td class="c">2021-02-23 ...</td><td class="c ip">58.49.50.74</td><td class="c">Windows 10</td><td class="c">Chrome 8</td><td class="c">4毫秒</td></tr>
<tr><td class="c">10</td><td class="l"><a>未知操作</a></td><td class="l u">/js/a/switch/default1</td><td class="c">接入日志</td><td class="c">超级管理员</td><td class="c n">否</td><td class="c b"></td><td></td><td class="c">2021-02-23 ...</td><td class="c ip">183.221.21.70</td><td class="c">Windows 10</td><td class="c">Chrome</td><td class="c">4毫秒</td></tr>
<tr><td class="c">11</td><td class="l"><a>系统管理/组织管理/用户管理</a></td><td class="l u">/js/a/sys/empUser/listData</td><td class="c">查询日志</td><td class="c">超级管理员</td><td class="c n">否</td><td class="c b">EmpUser</td><td></td><td class="c">2021-02-23 ...</td><td class="c ip">58.49.50.74</td><td class="c">Windows 10</td><td class="c">Chrome 8</td><td class="c">21毫秒</td></tr>
<tr><td class="c">12</td><td class="l"><a>系统管理/组织管理/用户管理</a></td><td class="l u">/js/a/sys/empUser/listData</td><td class="c">查询日志</td><td class="c">超级管理员</td><td class="c n">否</td><td class="c b">EmpUser</td><td></td><td class="c">2021-02-23 ...</td><td class="c ip">58.49.50.74</td><td class="c">Windows 10</td><td class="c">Chrome 8</td><td class="c">26毫秒</td></tr>
<tr class="last"><td></td><td></td><td></td><td></td><td></td><td></td><td></td><td></td><td></td><td></td><td></td><td></td><td></td></tr>
    </tbody></table>
    <div id="sbar"><i></i></div>
  </div>
  <div id="pager"><a class="pg dis" style="left:0.0px;width:42.1px"><svg width="7" height="11" viewBox="0 0 7 11" fill="none" stroke="currentColor" stroke-width="1.400" stroke-linecap="round" stroke-linejoin="round"><path d="M5.500 1.500L1.500 5.500l4 4"/></svg></a><a class="pg act" style="left:41.1px;width:41.2px">1</a><a class="pg" style="left:81.3px;width:41.9px">2</a><a class="pg" style="left:122.2px;width:41.2px">3</a><a class="pg" style="left:162.4px;width:41.3px">4</a><a class="pg" style="left:202.7px;width:41.5px">5</a><a class="pg" style="left:243.2px;width:41.9px">6</a><a class="pg" style="left:284.1px;width:41.1px">7</a><a class="pg dis" style="left:324.2px;width:41.9px">...</a><a class="pg" style="left:365.1px;width:63.2px">118885</a><a class="pg" style="left:427.3px;width:40.2px"><svg width="7" height="11" viewBox="0 0 7 11" fill="none" stroke="currentColor" stroke-width="1.400" stroke-linecap="round" stroke-linejoin="round"><path d="M1.500 1.500l4 4-4 4"/></svg></a></div>
  <div id="pinfo"><span style="left:0.6px">当前</span><span style="left:39.5px;font-size:14px">1</span><span style="left:62.0px">页，</span><span style="left:92.0px">每页</span><span style="left:129.0px;font-size:14px">20</span><span style="left:153.0px">条，</span><span style="left:182.5px">共</span><span style="left:201.0px;font-size:14px">2377700</span><span style="left:259.5px">条</span></div>
</div>
<div id="status">javascript:</div>
</body>
</html>
